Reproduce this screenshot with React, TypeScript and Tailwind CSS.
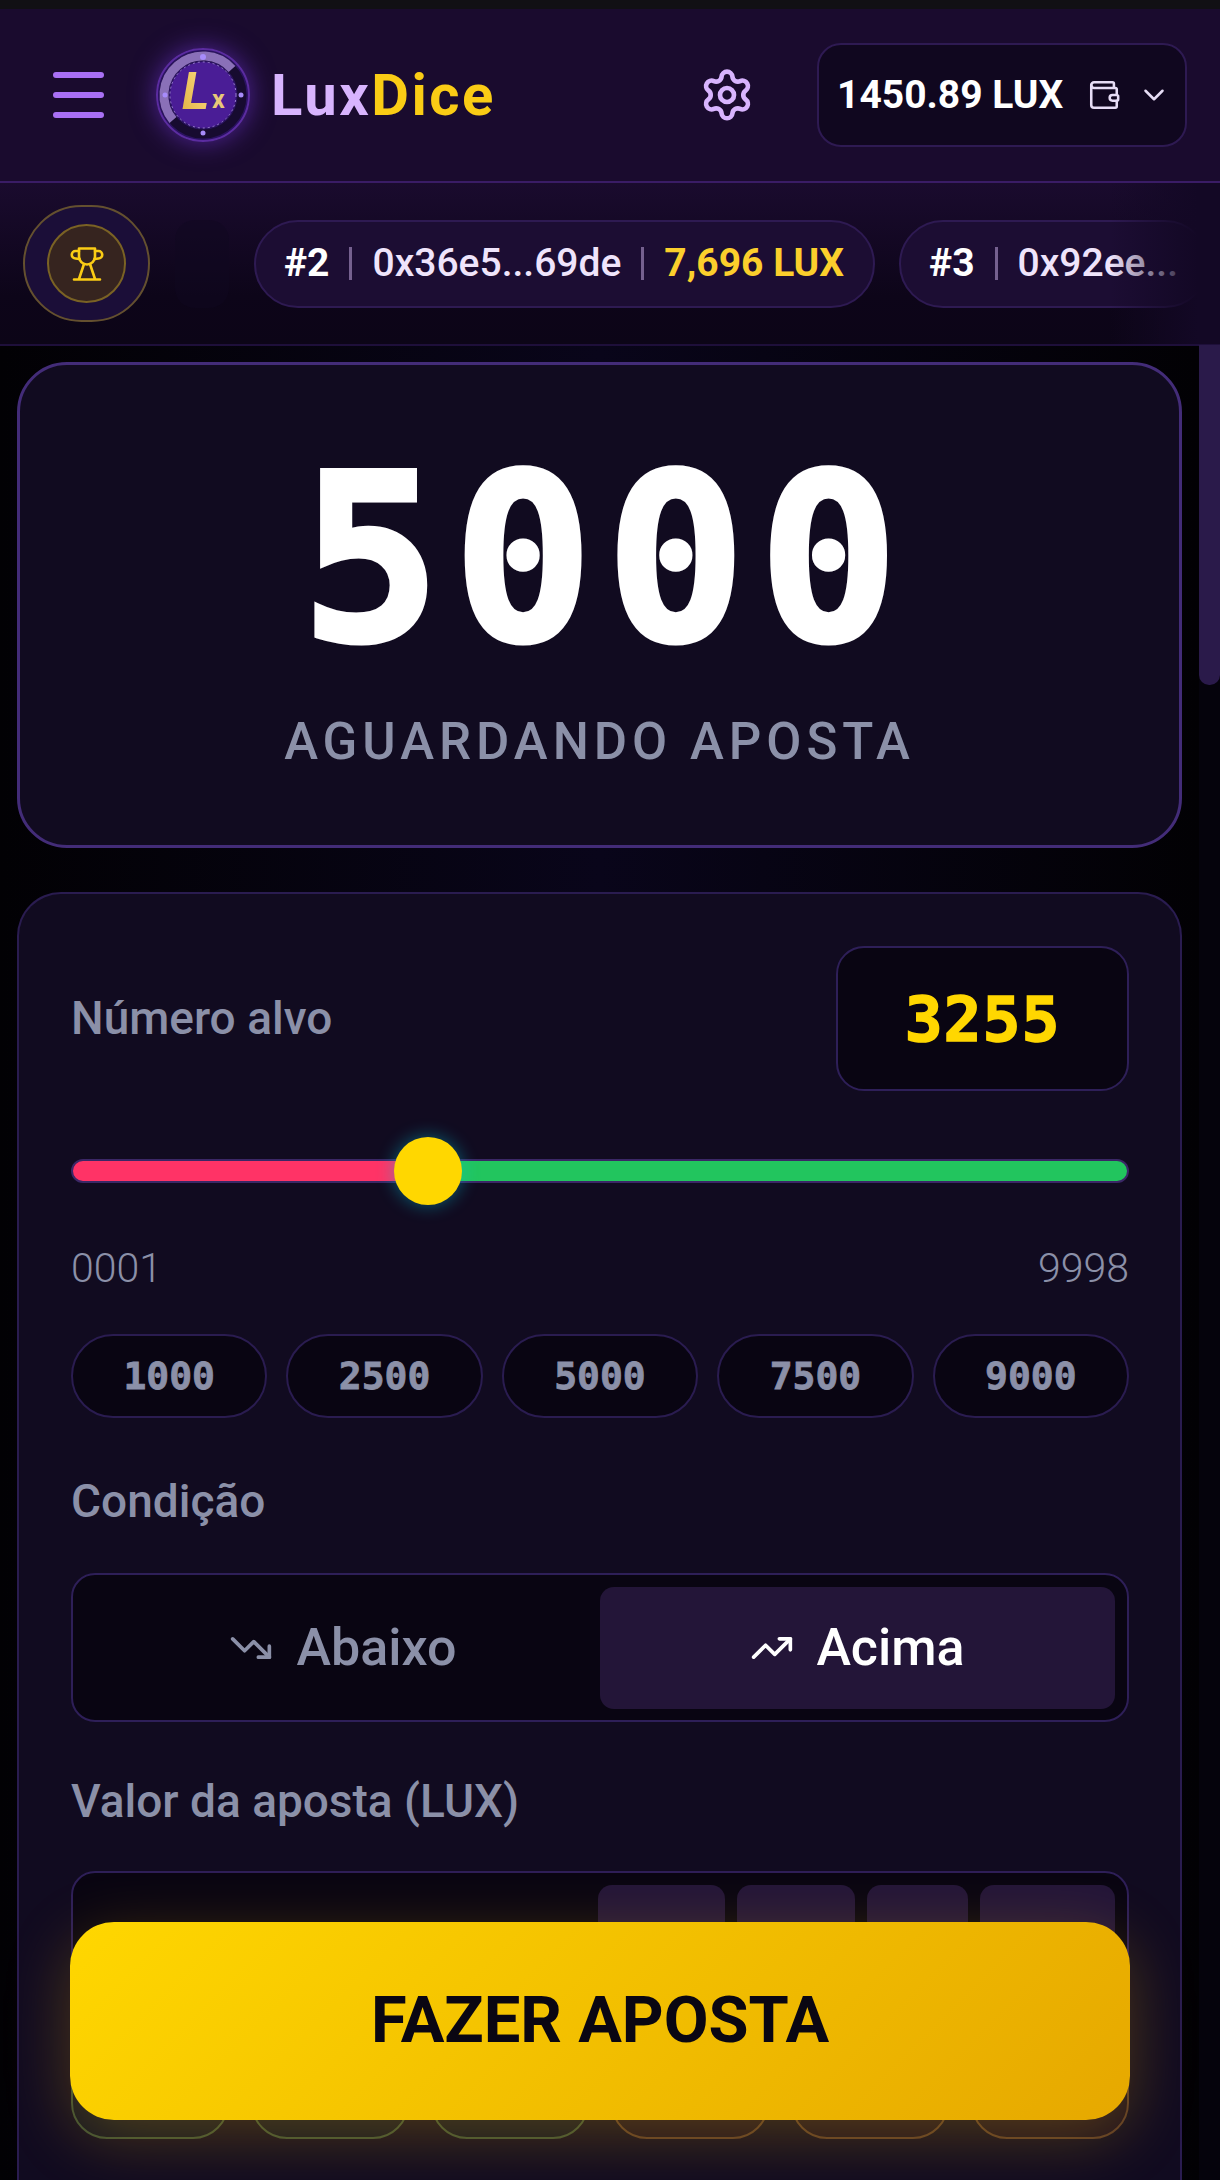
import { ChevronDown, Settings, TrendingDown, TrendingUp, Wallet } from "lucide-react";

function Logo() {
  return (
    <div className="w-[94px] h-[94px] rounded-full shadow-[0_0_26px_rgba(124,58,237,0.55)] shrink-0">
      <svg viewBox="0 0 94 94" width="94" height="94">
        <defs>
          <linearGradient id="gold" x1="0" y1="1" x2="1" y2="0">
            <stop offset="0" stopColor="#e0b040" />
            <stop offset="1" stopColor="#ffe08a" />
          </linearGradient>
        </defs>
        <circle cx="47" cy="47" r="46" fill="#2a1260" stroke="#5b2ca0" strokeWidth="2" />
        <circle cx="47" cy="47" r="39" fill="none" stroke="#170b30" strokeWidth="9" />
        <path d="M17 72 A39 39 0 0 1 76 21" fill="none" stroke="#8a70b8" strokeWidth="9" />
        <circle cx="47" cy="47" r="33" fill="#4a1d96" />
        <circle cx="47" cy="47" r="33" fill="none" stroke="#9a7fd0" strokeWidth="1" strokeDasharray="2 3" />
        <circle cx="47" cy="9" r="3" fill="#a78bfa" />
        <circle cx="47" cy="85" r="2.500" fill="#a78bfa" />
        <circle cx="85" cy="47" r="2.500" fill="#a78bfa" />
        <circle cx="9" cy="47" r="2.500" fill="#a78bfa" />
        <text x="26" y="61" fontFamily="Roboto, sans-serif" fontSize="52" fontWeight="700" fontStyle="italic" fill="url(#gold)">L</text>
        <text x="56" y="60" fontFamily="Roboto, sans-serif" fontSize="25" fontWeight="700" fill="#e8c878">x</text>
      </svg>
    </div>
  );
}

function TrophyIcon() {
  return (
    <svg viewBox="0 0 34 34" width="34" height="34" fill="none" stroke="#facc15" strokeWidth="2.600" strokeLinecap="round" strokeLinejoin="round">
      <path d="M9 1.500h16v8c0 4.500-3.500 8-8 8s-8-3.500-8-8z" />
      <path d="M9 4H5.500a3.500 3.500 0 0 0 0 7.500L9.500 12" />
      <path d="M25 4h3.500a3.500 3.500 0 0 1 0 7.500L24.500 12" />
      <path d="M14 17l-5 15M20 17l5 15M4 32.500h26" />
    </svg>
  );
}

function Sep() {
  return <span className="w-[3px] h-[33px] bg-[#75608f] shrink-0" />;
}

function Pill({ rank, addr, amount }: { rank: string; addr: string; amount?: string }) {
  return (
    <div className="h-[88px] rounded-full bg-[#1c0d33] border-2 border-[#2e1a52] flex items-center gap-[20px] pl-[28px] pr-[29px] shrink-0 text-[39px] whitespace-nowrap">
      <span className="font-bold text-white">{rank}</span>
      <Sep />
      <span className="font-medium text-[#efe4fb]">{addr}</span>
      {amount ? <Sep /> : null}
      {amount ? <span className="font-bold text-[#fbcf2c]">{amount}</span> : null}
    </div>
  );
}

const presets = ["1000", "2500", "5000", "7500", "9000"];

export default function App() {
  return (
    <div className="relative w-[1220px] h-[2180px] overflow-hidden flex flex-col bg-[#05030c] font-['Roboto',sans-serif]">
      <div className="h-[9px] shrink-0 bg-[#111014]" />

      <header className="h-[174px] shrink-0 bg-[#1a0b2e] border-b-2 border-[#3a1c66] flex items-center pl-[53px] pr-[33px]">
        <div className="w-[51px] flex flex-col gap-[14px] shrink-0">
          <span className="h-[6px] rounded-full bg-[#a970f5]" />
          <span className="h-[6px] rounded-full bg-[#a970f5]" />
          <span className="h-[6px] rounded-full bg-[#a970f5]" />
        </div>
        <div className="ml-[52px]">
          <Logo />
        </div>
        <div className="ml-[21px] text-[58px] font-bold tracking-[2.500px] leading-none">
          <span className="text-[#d8b4fe]">Lux</span>
          <span className="text-[#facc15]">Dice</span>
        </div>
        <Settings className="ml-auto text-[#d8b4fe]" size={56} strokeWidth={2} />
        <div className="ml-[62px] w-[370px] h-[104px] rounded-[24px] bg-[#10071f] border-2 border-[#2e1a52] flex items-center pl-[18px] text-white">
          <span className="text-[39px] font-bold leading-none whitespace-nowrap">1450.89 LUX</span>
          <Wallet className="ml-[24px] text-[#e6dcf5]" size={34} strokeWidth={1.800} />
          <ChevronDown className="ml-[16px] text-[#e6dcf5]" size={34} strokeWidth={1.800} />
        </div>
      </header>

      <section className="relative h-[163px] shrink-0 overflow-hidden bg-[linear-gradient(180deg,#1a0b2e_0%,#0d0519_70%,#0c0517_100%)] border-b-2 border-[#1e0f3a] flex items-center pl-[23px]">
        <div className="w-[127px] h-[117px] rounded-full bg-[#1b0e38] border-2 border-[#64502f] flex items-center justify-center shrink-0">
          <div className="w-[79px] h-[79px] rounded-full bg-[#36241f] border-2 border-[#7a6224] flex items-center justify-center">
            <TrophyIcon />
          </div>
        </div>
        <div className="ml-[25px] w-[54px] h-[88px] rounded-[20px] bg-[#10071f]/50 shrink-0" />
        <div className="ml-[25px] flex items-center gap-[24px]">
          <Pill rank="#2" addr="0x36e5...69de" amount="7,696 LUX" />
          <Pill rank="#3" addr="0x92ee..." />
        </div>
        <div className="absolute top-0 bottom-0 right-0 w-[110px] bg-[linear-gradient(90deg,rgba(19,8,37,0)_0%,#130825_80%)]" />
      </section>

      <main className="flex-1 min-h-0 w-[1199px] px-[17px] pt-[16px] flex flex-col gap-[44px] bg-[linear-gradient(90deg,#020104_0%,#09051a_50%,#020104_100%)]">
        <section className="h-[486px] shrink-0 rounded-[50px] bg-[#110b20] border-[3px] border-[#432c78] flex flex-col items-center">
          <div className="mt-[79px] pl-[13px] h-[232px] text-[232px] leading-[232px] font-bold tracking-[13px] text-white [-webkit-text-stroke:5px_white] font-['DejaVu_Sans_Mono',monospace]">5000</div>
          <div className="mt-[38px] text-[51px] leading-[56px] font-medium tracking-[5px] text-[#8b90a8]">AGUARDANDO APOSTA</div>
        </section>

        <section className="flex-1 rounded-t-[44px] bg-[#110b20] border-2 border-b-0 border-[#2a1c50] pl-[52px] pr-[51px] pt-[52px]">
          <div className="flex items-center justify-between">
            <span className="text-[46px] font-medium text-[#8b90a8]">Número alvo</span>
            <div className="w-[293px] h-[145px] pt-[3px] rounded-[28px] bg-[#090512] border-2 border-[#2e1f58] flex items-center justify-center text-[63px] font-bold tracking-[1px] text-[#ffd700] [-webkit-text-stroke:1.500px_#ffd700] font-['DejaVu_Sans_Mono',monospace]">
              3255
            </div>
          </div>

          <div className="relative mt-[68px] h-[24px] rounded-full border-2 border-[#3b2766] bg-[linear-gradient(90deg,#ff3366_33%,#22c55e_33%)]">
            <div className="absolute left-[321px] top-[-24px] w-[68px] h-[68px] rounded-full bg-[#ffd700] shadow-[0_0_18px_rgba(0,200,220,0.45)]" />
          </div>

          <div className="mt-[61px] flex justify-between text-[41px] leading-[48px] font-light text-[#8b90a8]">
            <span>0001</span>
            <span>9998</span>
          </div>

          <div className="mt-[42px] grid grid-cols-5 gap-[19px]">
            {presets.map((p) => (
              <div key={p} className="h-[84px] rounded-full bg-[#090512] border-2 border-[#2a1c50] flex items-center justify-center text-[38px] font-bold text-[#8b90a8] [-webkit-text-stroke:0.800px_#8b90a8] font-['DejaVu_Sans_Mono',monospace]">
                {p}
              </div>
            ))}
          </div>

          <div className="mt-[58px] text-[46px] leading-[50px] font-medium text-[#8b90a8]">Condição</div>

          <div className="mt-[47px] h-[149px] rounded-[24px] bg-[#090512] border-2 border-[#2e1f58] flex items-center p-[12px] gap-0">
            <div className="flex-1 flex items-center justify-center gap-[24px] text-[#8b90a8] text-[52px] font-medium">
              <TrendingDown size={44} strokeWidth={2} />
              Abaixo
            </div>
            <div className="flex-1 h-[122px] rounded-[14px] bg-[#231538] flex items-center justify-center gap-[22px] text-white text-[52px] font-medium">
              <TrendingUp size={44} strokeWidth={2} />
              Acima
            </div>
          </div>

          <div className="mt-[54px] text-[46px] leading-[50px] font-medium text-[#8b90a8]">Valor da aposta (LUX)</div>

          <div className="mt-[45px] h-[150px] rounded-[24px] bg-[#090512] border-2 border-[#2e1f58] flex p-[12px] justify-end gap-[12px]">
            <div className="w-[127px] rounded-[14px] bg-[#231538]" />
            <div className="w-[118px] rounded-[14px] bg-[#231538]" />
            <div className="w-[101px] rounded-[14px] bg-[#231538]" />
            <div className="w-[135px] rounded-[14px] bg-[#231538]" />
          </div>

          <div className="mt-[30px] flex justify-between">
            {["a", "b", "c"].map((k) => (
              <div key={k} className="w-[158px] h-[88px] rounded-[36px] bg-[#22c55e]/5 border-2 border-[#3d4f36]" />
            ))}
            {["d", "e", "f"].map((k) => (
              <div key={k} className="w-[158px] h-[88px] rounded-[36px] bg-[#f97316]/5 border-2 border-[#5a3a28]" />
            ))}
          </div>
        </section>
      </main>

      <div className="absolute left-[1199px] top-[345px] w-[21px] h-[340px] rounded-b-[10px] bg-[#2a1a4a]" />

      <button className="absolute left-[70px] top-[1922px] w-[1060px] h-[198px] rounded-[44px] bg-[linear-gradient(135deg,#ffd700_0%,#e6a800_100%)] shadow-[0_16px_64px_rgba(255,190,0,0.25)] text-[65px] font-bold text-[#0a0612]">
        FAZER APOSTA
      </button>
    </div>
  );
}
